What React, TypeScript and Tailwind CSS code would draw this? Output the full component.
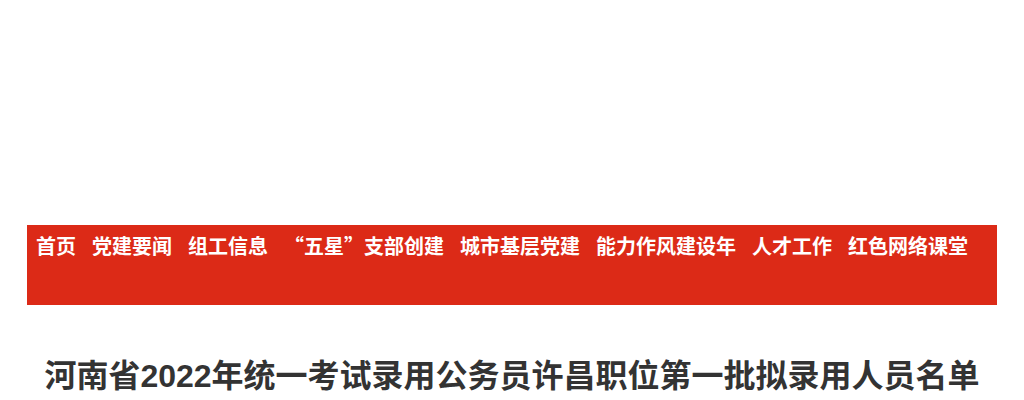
const navItems = [
  '首页',
  '党建要闻',
  '组工信息',
  '“五星”支部创建',
  '城市基层党建',
  '能力作风建设年',
  '人才工作',
  '红色网络课堂',
]

export default function App() {
  return (
    <div
      className="min-h-screen bg-white"
      style={{ fontFamily: '"Noto Sans CJK SC", "Liberation Sans", sans-serif' }}
    >
      {/* header area left blank */}
      <div className="h-[225px]" />

      {/* Nav */}
      <div className="mx-auto w-[970px] h-[80px] bg-[#dc2a17] pl-[9px] pt-[6px]">
        <ul className="flex gap-[16px]">
          {navItems.map(item => (
            <li key={item} className="text-[20px] leading-[30px] font-bold text-white whitespace-nowrap">
              {item}
            </li>
          ))}
        </ul>
      </div>

      {/* Title */}
      <div className="mx-auto w-[970px] pt-[48px]">
        <h1
          className="text-center text-[32px] leading-[46px] font-bold text-[#333333] whitespace-nowrap"
          style={{ fontFamily: '"Liberation Sans", "Noto Sans CJK SC", sans-serif' }}
        >
          河南省2022年统一考试录用公务员许昌职位第一批拟录用人员名单
        </h1>
      </div>
    </div>
  )
}
